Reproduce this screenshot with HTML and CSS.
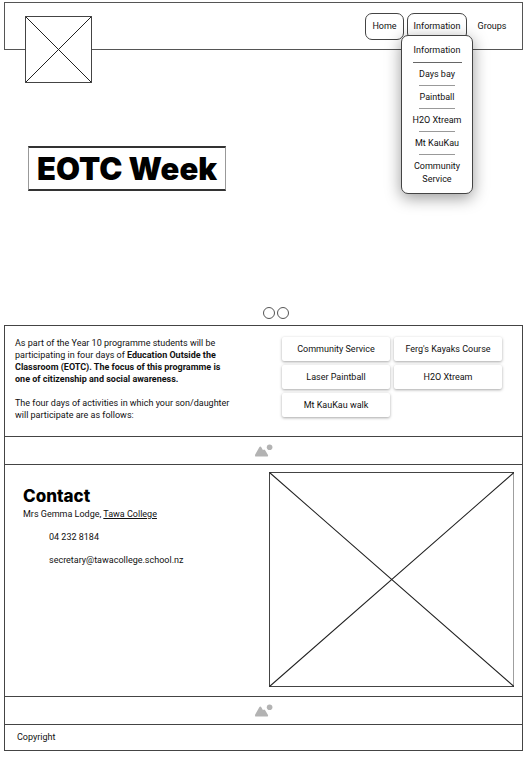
FILE: index.html
```html
<!DOCTYPE html>
<html lang="en">
<head>
<meta charset="utf-8">
<title>EOTC Week</title>
<link rel="stylesheet" href="styles.css">
</head>
<body>
<header class="header">
  <svg class="logo" viewBox="0 0 67 67" aria-hidden="true"><path class="box" d="M.5 .5H66.5V66.5H.5Z"/><path d="M.5 .5L66.5 66.5M66.5 .5L.5 66.5"/></svg>
  <nav class="nav">
    <a class="tab" href="#">Home</a>
    <div class="dropdown">
      <a class="tab tab-open" href="#">Information</a>
      <ul class="menu">
        <li><a href="#">Information</a></li>
        <li><a href="#">Days bay</a></li>
        <li><a href="#">Paintball</a></li>
        <li><a href="#">H2O Xtream</a></li>
        <li><a href="#">Mt KauKau</a></li>
        <li><a href="#">Community Service</a></li>
      </ul>
    </div>
    <a class="tab tab-plain" href="#">Groups</a>
  </nav>
</header>
<main>
  <section class="hero">
    <h1>EOTC Week</h1>
    <div class="dots"><span></span><span></span></div>
  </section>
  <section class="panel intro">
    <div class="copy">
      <p>As part of the Year 10 programme students will be participating in four days of <strong>Education Outside the Classroom (EOTC). The focus of this programme is one of citizenship and social awareness.</strong></p>
      <p>The four days of activities in which your son/daughter will participate are as follows:</p>
    </div>
    <div class="activities">
      <button type="button">Community Service</button>
      <button type="button">Ferg's Kayaks Course</button>
      <button type="button">Laser Paintball</button>
      <button type="button">H2O Xtream</button>
      <button type="button">Mt KauKau walk</button>
    </div>
  </section>
  <div class="panel strip">
    <svg viewBox="0 0 18 13" aria-hidden="true"><path d="M.3 12.5Q-.2 11.8 .2 10.6L4.3 3.2Q5.3 1.8 6.3 3.2L8 6.2Q9 4.7 10 6L13 11Q13.3 12.5 12.5 12.5Z"/><circle cx="14.6" cy="3.2" r="2.8"/></svg>
  </div>
  <section class="panel contact">
    <div class="details">
      <h2>Contact</h2>
      <p>Mrs Gemma Lodge, <a href="#">Tawa College</a></p>
      <p class="line">04 232 8184</p>
      <p class="line">secretary@tawacollege.school.nz</p>
    </div>
    <svg class="picture" viewBox="0 0 244 215" preserveAspectRatio="none" aria-hidden="true"><path class="box" d="M.5 .5H243.5V214.5H.5Z"/><path d="M.5 .5L243.5 214.5M243.5 .5L.5 214.5"/></svg>
  </section>
  <div class="panel strip">
    <svg viewBox="0 0 18 13" aria-hidden="true"><path d="M.3 12.5Q-.2 11.8 .2 10.6L4.3 3.2Q5.3 1.8 6.3 3.2L8 6.2Q9 4.7 10 6L13 11Q13.3 12.5 12.5 12.5Z"/><circle cx="14.6" cy="3.2" r="2.8"/></svg>
  </div>
</main>
<footer class="panel footer">Copyright</footer>
</body>
</html>
```
FILE: styles.css
```css
* {
  box-sizing: border-box;
}

body {
  margin: 0;
  padding: 2px 3px 0 4px;
  background: #fff;
  color: #111;
  font: 9px/12px Roboto, "Liberation Sans", sans-serif;
}

h1, h2, p, ul {
  margin: 0;
  padding: 0;
}

a {
  color: inherit;
  text-decoration: none;
}

svg {
  display: block;
  fill: none;
  stroke: #222;
  stroke-width: 1;
}

svg .box {
  fill: #fff;
  stroke: #444;
}

.header {
  position: relative;
  display: flex;
  justify-content: flex-end;
  height: 48px;
  padding: 10px 8px 0 0;
  border: 1px solid #555;
}

.logo {
  position: absolute;
  top: 13px;
  left: 20px;
  width: 67px;
  height: 67px;
}

.nav {
  display: flex;
  align-items: flex-start;
  gap: 3px;
}

.tab {
  display: block;
  width: 39px;
  height: 27px;
  border: 1px solid #444;
  border-radius: 7px;
  line-height: 24px;
  text-align: center;
}

.tab-open {
  width: 60px;
}

.tab-plain {
  width: 44px;
  border-color: transparent;
}

.dropdown {
  position: relative;
}

.menu {
  position: absolute;
  z-index: 1;
  top: 22px;
  left: -6px;
  width: 72px;
  padding: 4px 10px 7px;
  border: 1px solid #444;
  border-radius: 7px;
  background: #fff;
  box-shadow: 0 4px 16px rgba(0, 0, 0, 0.4);
  list-style: none;
  text-align: center;
}

.menu li {
  display: flex;
  flex-direction: column;
  align-items: center;
  line-height: 13px;
}

.menu li a {
  padding: 4px 0 5px;
  white-space: nowrap;
}

.menu li + li a {
  padding: 5px 0 4px;
}

.menu li:last-child a {
  padding-bottom: 0;
  white-space: normal;
}

.menu li:not(:last-child)::after {
  content: "";
  width: 36px;
  border-bottom: 1px solid #999;
}

.menu li:first-child::after {
  width: 49px;
  border-color: #666;
}

.hero {
  display: flex;
  flex-direction: column;
  align-items: flex-start;
  justify-content: space-between;
  height: 275px;
  padding: 96px 24px 6px;
}

h1 {
  padding: 0 8px;
  border: 1px solid #999;
  border-width: 2px 1px;
  border-top-color: #333;
  border-bottom-color: #333;
  color: #000;
  font: 900 31px/41px Inter, sans-serif;
}

h2 {
  color: #000;
  font: 800 17px/20px Inter, sans-serif;
}

.dots {
  display: flex;
  align-self: center;
  gap: 2px;
  padding-left: 24px;
}

.dots span {
  width: 12px;
  height: 12px;
  border: 1px solid #555;
  border-radius: 50%;
}

.panel {
  border: 1px solid #444;
}

.panel + .panel {
  border-top: 0;
}

.intro {
  display: flex;
  justify-content: space-between;
  gap: 24px;
  min-height: 112px;
  padding: 11px 20px 11px 10px;
}

.copy {
  display: grid;
  flex: 0 1 220px;
  align-content: start;
  gap: 12px;
}

.activities {
  display: grid;
  flex: 0 1 220px;
  grid-template-columns: 1fr 1fr;
  grid-auto-rows: 24px;
  gap: 4px;
}

button {
  padding: 0;
  border: 0;
  border-radius: 2px;
  background: #fff;
  box-shadow: 0 1px 3px rgba(0, 0, 0, 0.35);
  color: inherit;
  font: inherit;
}

.strip {
  display: flex;
  align-items: center;
  justify-content: center;
  height: 28px;
}

.strip svg {
  width: 18px;
  height: 13px;
  fill: #b3b3b3;
  stroke: none;
}

.contact {
  display: flex;
  justify-content: space-between;
  min-height: 232px;
  padding: 7px 8px 9px 18px;
}

.details {
  padding-top: 14px;
}

.details a {
  text-decoration: underline;
}

.details p {
  margin-top: 2px;
}

.details .line {
  margin: 11px 0 0 26px;
}

.picture {
  flex: 0 0 50%;
  width: 50%;
  height: 215px;
}

.footer {
  padding: 6px 12px 7px;
}

main + .footer {
  border-top: 0;
}
```
